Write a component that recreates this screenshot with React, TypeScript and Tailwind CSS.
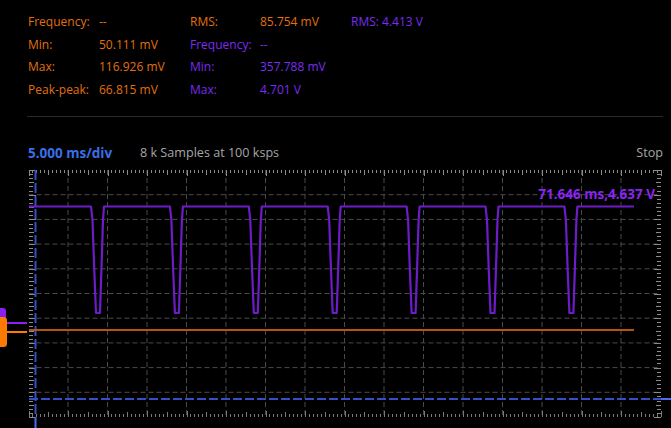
import React from 'react';

const ORANGE = 'text-[#e2700e]';
const PURPLE = 'text-[#7a2cf2]';

// plot geometry (page coordinates)
const X0 = 28.5;
const X1 = 660.5;
const Y0 = 170;
const Y1 = 417;
const DX = (X1 - X0) / 16;
const DY = (Y1 - Y0) / 10;

function tracePath() {
  const hi = 206.5;
  const lo = 313;
  const shape: [number, number][] = [
    [0, hi], [1.5, 220], [3.2, 268], [5, lo], [9, lo], [10.5, 268], [12, 220], [13, hi],
  ];
  let d = `M29 ${hi}`;
  for (let k = 0; k < 7; k++) {
    const x0 = 91 + k * 78.9;
    for (const [dx, y] of shape) d += ` L${(x0 + dx).toFixed(1)} ${y}`;
  }
  d += ` L634 ${hi}`;
  return d;
}

function Scope() {
  const vLines = Array.from({ length: 15 }, (_, i) => X0 + DX * (i + 1));
  const hLines = Array.from({ length: 9 }, (_, i) => Y0 + DY * (i + 1));
  const xTicks = Array.from({ length: 161 }, (_, i) => i);
  const yTicks = Array.from({ length: 61 }, (_, i) => i);

  return (
    <svg width={671} height={266} className="block" viewBox="0 162 671 266">
      {/* grid */}
      {vLines.map(x => (
        <line key={'v' + x} x1={x} y1={Y0} x2={x} y2={Y1} stroke="#4a4a4a" strokeWidth={1} strokeDasharray="5 3" />
      ))}
      {hLines.map(y => (
        <line key={'h' + y} x1={X0} y1={y} x2={X1} y2={y} stroke="#4a4a4a" strokeWidth={1} strokeDasharray="5 3" />
      ))}

      {/* top + bottom rulers */}
      {xTicks.map(i => {
        const x = Math.round(X0 + (DX / 10) * i) + 0.5;
        const len = i % 10 === 0 ? 6 : i % 5 === 0 ? 5 : 3;
        return (
          <g key={'xt' + i}>
            <line x1={x} y1={Y0} x2={x} y2={Y0 + len} stroke="#8c8c8c" strokeWidth={1} />
            <line x1={x} y1={Y1} x2={x} y2={Y1 - len} stroke="#7a7a7a" strokeWidth={1} />
          </g>
        );
      })}

      {/* left + right rulers */}
      {yTicks.map(i => {
        const y = Math.round(Y0 + (DY / 6) * i) + 0.5;
        const len = i % 6 === 0 ? 7 : i % 3 === 0 ? 5 : 4;
        return (
          <g key={'yt' + i}>
            <line x1={29} y1={y} x2={29 + len} y2={y} stroke="#8c8c8c" strokeWidth={1} />
            <line x1={661} y1={y} x2={661 - len} y2={y} stroke="#8c8c8c" strokeWidth={1} />
          </g>
        );
      })}

      {/* blue time / offset cursors */}
      <line x1={29} y1={399} x2={X1} y2={399} stroke="#3350c8" strokeWidth={2} strokeDasharray="9 3" />
      <line x1={X1} y1={399} x2={671} y2={399} stroke="#4a6cf2" strokeWidth={2} />
      <line x1={35.5} y1={Y0} x2={35.5} y2={Y1} stroke="#3350c8" strokeWidth={2} strokeDasharray="10 3" />
      <line x1={35.5} y1={Y1} x2={35.5} y2={428} stroke="#4a6cf2" strokeWidth={2} />

      {/* channel A (orange) */}
      <line x1={29} y1={330} x2={634} y2={330} stroke="#b4540e" strokeWidth={2} />

      {/* channel B (purple) */}
      <path d={tracePath()} fill="none" stroke="#6d1cc8" strokeWidth={2.2} strokeLinejoin="round" />

      <text x={655} y={199} textAnchor="end" fill="#8a24f2" fontSize={13.5} fontWeight={700}
        fontFamily="'Open Sans', sans-serif">71.646 ms,4.637 V</text>

      {/* channel markers */}
      <line x1={5} y1={323} x2={27} y2={323} stroke="#8a1ff0" strokeWidth={2} />
      <rect x={-4} y={308} width={10} height={14} rx={3} fill="#8a1ff0" />
      <line x1={6} y1={332} x2={27} y2={332} stroke="#ff7a00" strokeWidth={2} />
      <rect x={-4} y={317} width={11} height={30} rx={3.5} fill="#ff7a00" />
    </svg>
  );
}

export default function App() {
  return (
    <div className="w-[671px] h-[428px] overflow-hidden bg-black font-['Open_Sans',sans-serif]">
      {/* measurements */}
      <div className="h-[116px]">
        <div className="grid grid-cols-[71px_91px_70px_91px_auto] pl-[28px] pt-[11px] text-[12px] leading-[22.67px]">
          <span className={ORANGE}>Frequency:</span>
          <span className={ORANGE}>--</span>
          <span className={ORANGE}>RMS:</span>
          <span className={ORANGE}>85.754 mV</span>
          <span className={PURPLE}>RMS: 4.413 V</span>

          <span className={ORANGE}>Min:</span>
          <span className={ORANGE}>50.111 mV</span>
          <span className={PURPLE}>Frequency:</span>
          <span className={PURPLE}>--</span>
          <span />

          <span className={ORANGE}>Max:</span>
          <span className={ORANGE}>116.926 mV</span>
          <span className={PURPLE}>Min:</span>
          <span className={PURPLE}>357.788 mV</span>
          <span />

          <span className={ORANGE}>Peak-peak:</span>
          <span className={ORANGE}>66.815 mV</span>
          <span className={PURPLE}>Max:</span>
          <span className={PURPLE}>4.701 V</span>
          <span />
        </div>
      </div>
      <div className="ml-[27px] w-[636px] h-px bg-[#2a2a2a]" />

      {/* timebase header */}
      <div className="mt-[27px] h-[18px] flex items-center pl-[28px] pr-[8px] leading-[18px]">
        <span className="w-[112px] text-[13.5px] font-bold text-[#3a6fe6]">5.000 ms/div</span>
        <span className="text-[12.6px] text-[#a6a6a6]">8 k Samples at 100 ksps</span>
        <span className="ml-auto text-[12.6px] text-[#a6a6a6]">Stop</span>
      </div>

      <Scope />
    </div>
  );
}
